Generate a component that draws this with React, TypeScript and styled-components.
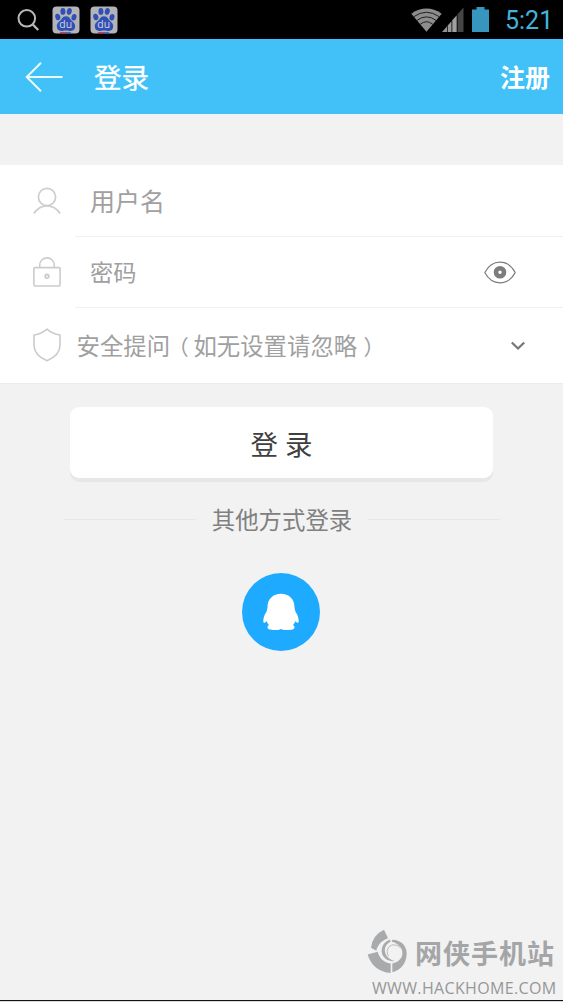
import React from 'react';
import styled, { createGlobalStyle } from 'styled-components';

const GlobalStyle = createGlobalStyle`
  * { box-sizing: border-box; }
  html, body { margin: 0; padding: 0; background: #f2f2f2; }
  body { font-family: Roboto, 'Noto Sans CJK SC', sans-serif; overflow: hidden; }
  svg { display: block; flex: none; }
`;

const Screen = styled.main`
  display: flex;
  flex-direction: column;
  width: 563px;
  height: 1002px;
  background: #f2f2f2;
  overflow: hidden;
`;

const StatusBar = styled.div`
  display: flex;
  justify-content: space-between;
  flex: none;
  height: 39px;
  padding: 0 11px 0 16px;
  background: #000;
`;

const StatusGroup = styled.div<{ $gap?: number; $left?: number }>`
  display: flex;
  align-items: center;
  gap: ${(p) => p.$gap ?? 0}px;
  margin-left: ${(p) => p.$left ?? 0}px;
`;

const Clock = styled.span`
  width: 47px;
  margin-left: 16px;
  padding-top: 2px;
  color: #43b3de;
  font: 400 25px/30px Roboto, sans-serif;
  white-space: nowrap;
`;

const Header = styled.header`
  display: flex;
  align-items: center;
  flex: none;
  height: 75px;
  padding: 0 13px 0 25px;
  background: #41c1f7;
  color: #fff;
`;

const Title = styled.h1`
  flex: 1;
  margin: -2px 0 0 31px;
  font: 400 27.5px/40px 'Noto Sans CJK SC', sans-serif;
  -webkit-text-stroke: 0.3px #fff;
`;

const Register = styled.a`
  margin-top: -2px;
  font: 700 25px/40px 'Noto Sans CJK SC', sans-serif;
`;

const Form = styled.form`
  flex: none;
  height: 219px;
  margin-top: 51px;
  background: #fff;
  border-bottom: 1px solid #ececec;
`;

const Field = styled.div<{ $height: number }>`
  display: flex;
  height: ${(p) => p.$height}px;
  padding-left: 33px;
`;

const IconSlot = styled.div`
  display: flex;
  align-items: center;
  width: 42px;
  padding-bottom: 1px;
`;

const FieldBody = styled.div<{ $indent: number; $right: number; $last?: boolean }>`
  display: flex;
  flex: 1;
  align-items: center;
  justify-content: space-between;
  padding: 0 ${(p) => p.$right}px 0 ${(p) => p.$indent}px;
  border-bottom: ${(p) => (p.$last ? 'none' : '1px solid #f0f0f0')};
`;

const Placeholder = styled.span<{ $size: number }>`
  margin-top: -2px;
  color: #a0a0a0;
  font: 400 ${(p) => p.$size}px/34px 'Noto Sans CJK SC', sans-serif;
  white-space: nowrap;
`;

const Paren = styled.span<{ $shift: number }>`
  display: inline-block;
  width: 23.4px;
  margin: 0 ${(p) => -p.$shift}px 0 ${(p) => p.$shift}px;
  text-align: center;
  font-size: 21px;
  line-height: 24px;
`;

const LoginButton = styled.button`
  flex: none;
  width: 423px;
  height: 71px;
  margin: 23px 0 0 70px;
  padding: 0;
  border: 0;
  border-radius: 9px;
  background: #fff;
  box-shadow: 0 4px 0 #e7e7e7;
  color: #404040;
  font: 400 27.5px/40px 'Noto Sans CJK SC', sans-serif;
  word-spacing: 1px;
`;

const Divider = styled.div`
  display: flex;
  align-items: center;
  justify-content: space-between;
  flex: none;
  height: 36px;
  margin: 23px 63px 0 64px;
`;

const Rule = styled.span`
  width: 132px;
  height: 1px;
  background: #e7e7e7;
`;

const DividerText = styled.span`
  color: #808080;
  font: 400 23.4px/36px 'Noto Sans CJK SC', sans-serif;
`;

const QQButton = styled.div`
  display: flex;
  align-items: center;
  justify-content: center;
  flex: none;
  width: 78px;
  height: 78px;
  margin: 36px 0 0 242.4px;
  border-radius: 50%;
  background: #1eaaff;
`;

const Watermark = styled.footer`
  display: flex;
  flex-direction: column;
  align-self: flex-end;
  width: 196px;
  height: 73px;
  margin-top: auto;
  color: #a4a5a6;
`;

const Brand = styled.div`
  display: flex;
  align-items: center;
  height: 48px;
`;

const BrandName = styled.span`
  margin: 4px 0 0 7px;
  font: 700 27px/40px 'Noto Sans CJK SC', sans-serif;
  letter-spacing: 1px;
  white-space: nowrap;
`;

const Site = styled.span`
  margin: 2px 0 0 5px;
  color: #969798;
  font: 400 16px/22px 'Open Sans', sans-serif;
  letter-spacing: 0.35px;
  white-space: nowrap;
`;

const BottomEdge = styled.div`
  flex: none;
  height: 2px;
  background: #d8dcdf;
  border-top: 1px solid #101214;
`;

const BaiduIcon = () => (
  <svg width="28" height="28" viewBox="0 0 28 28">
    <rect x=".5" y=".5" width="27" height="27" rx="4" fill="#b4b4b8" />
    <g fill="#3150b5">
      <ellipse cx="5.8" cy="11" rx="2.5" ry="3.3" transform="rotate(-15 5.8 11)" />
      <ellipse cx="10.9" cy="5.4" rx="2.5" ry="3.4" />
      <ellipse cx="17.3" cy="5.4" rx="2.5" ry="3.4" transform="rotate(10 17.3 5.4)" />
      <ellipse cx="22" cy="11.2" rx="2.5" ry="3.3" transform="rotate(12 22 11.2)" />
      <path d="M14 10.3c2.3 0 3.4 1.3 4.5 3 1.5 2.2 4.7 3.6 4.7 7 0 3-1.8 4.6-4.4 4.6-1.8 0-3-.5-4.8-.5s-3 .5-4.8.5c-2.6 0-4.4-1.6-4.4-4.6 0-3.4 3.2-4.8 4.7-7 1.1-1.7 2.2-3 4.5-3z" />
    </g>
    <path d="M8 27h6" stroke="#a52b45" strokeWidth="1.5" />
    <path d="M14 27h5" stroke="#3150b5" strokeWidth="1.5" />
    <text x="13.7" y="22.3" textAnchor="middle" fill="#d4d5df" fontFamily="Open Sans, sans-serif" fontSize="10.500" fontWeight="400">du</text>
  </svg>
);

const SearchIcon = () => (
  <svg width="24" height="24" viewBox="0 0 24 24" fill="none" stroke="#b8b8b8" strokeWidth="2">
    <circle cx="10.8" cy="10.3" r="8.3" />
    <path d="M16.8 16.5l5.4 5.5" strokeWidth="2.4" />
  </svg>
);

const WifiIcon = () => (
  <svg width="31" height="24" viewBox="0 0 32 24">
    <path d="M.3 5.500Q16-5 31.700 5.500L16 24z" fill="#8d8d8d" />
    <g fill="none" stroke="#1c1c1c" strokeWidth="1">
      <path d="M3 8.500Q16-.5 29 8.500" />
      <path d="M6 12.500Q16 5 26 12.500" />
      <path d="M9.500 16.500Q16 11 22.500 16.500" />
    </g>
  </svg>
);

const SignalIcon = () => (
  <svg width="22" height="25" viewBox="0 0 22 25">
    <path d="M0 25L5 19.300V25z" fill="#929292" />
    <path d="M5.700 18.500L9.500 14.200V25H5.700z" fill="#989898" />
    <path d="M10.300 13.300L14.700 8.300V25h-4.400z" fill="#a0a0a0" />
    <path d="M15.600 7.300L21.500.6V25h-5.900z" fill="#454545" />
  </svg>
);

const BatteryIcon = () => (
  <svg width="17" height="25" viewBox="0 0 17 25">
    <path d="M4.500 0h8v2.500H17V25H0V2.500h4.500z" fill="#3796bd" />
  </svg>
);

const BackIcon = () => (
  <svg width="38" height="30" viewBox="0 0 38 30" fill="none" stroke="#eafaff" strokeWidth="2">
    <path d="M37.500 15H1.700M16 .8L1.700 15 16 29.200" />
  </svg>
);

const UserIcon = () => (
  <svg width="28" height="28" viewBox="0 0 28 28" fill="none" stroke="#cecece" strokeWidth="1.7">
    <circle cx="14" cy="10" r="8.600" />
    <path d="M.9 26.500Q6 18.800 14 18.800t13.100 7.700" />
  </svg>
);

const LockIcon = () => (
  <svg width="28" height="30" viewBox="0 0 28 30" fill="none" stroke="#cccccc" strokeWidth="1.600">
    <rect x=".9" y="10.600" width="26.200" height="18.400" rx="1" />
    <path d="M6.700 10.600V8.200a7.300 7.300 0 0 1 14.600 0v2.400" />
    <circle cx="14" cy="19.300" r="1.800" strokeWidth="1.800" />
  </svg>
);

const ShieldIcon = () => (
  <svg width="28" height="34" viewBox="0 0 28 34" fill="none" stroke="#cbcbcb" strokeWidth="1.600" strokeLinejoin="round">
    <path d="M14 1.200Q19.500 6 27 7v10.500Q27 27 14 32.800 1 27 1 17.500V7Q8.500 6 14 1.200z" />
  </svg>
);

const EyeIcon = () => (
  <svg width="32" height="23" viewBox="0 0 32 23" fill="none" stroke="#7c7c7c">
    <path d="M.8 11.500C4.500 4.500 9.800 1.200 16 1.200s11.500 3.300 15.200 10.300C27.500 18.500 22.200 21.800 16 21.800S4.500 18.500.8 11.500z" strokeWidth="1.200" />
    <circle cx="16" cy="11.300" r="4" strokeWidth="4.600" />
  </svg>
);

const ChevronIcon = () => (
  <svg width="14" height="10" viewBox="0 0 14 10" fill="none" stroke="#777" strokeWidth="2.300">
    <path d="M.8 1.500L7 7.500l6.200-6" />
  </svg>
);

const PenguinIcon = () => (
  <svg width="36" height="38" viewBox="0 0 36 38" fill="#fff">
    <path d="M18 .8C10.200.8 4.500 6.200 4.500 14c0 2-.6 3.200-1.100 5C1.500 21.500.3 25 .3 28c0 1.600.8 2.200 1.700 1.400l1.800-1.200c.4 1.600 1.200 2.800 2.200 3.800-1 .6-1.500 1.500-1.500 2.500 0 1.800 3 2.500 6.500 2.500 3.200 0 5.600-.1 7-1.100 1.400 1 3.800 1.100 7 1.100 3.500 0 6.500-.7 6.500-2.500 0-1-.5-1.900-1.500-2.500 1-1 1.800-2.200 2.200-3.800l1.800 1.200c.9.8 1.700.2 1.700-1.400 0-3-1.200-6.500-3.100-9-.5-1.800-1.100-3-1.100-5C31.500 6.200 25.800.8 18 .8z" />
  </svg>
);

const BrandLogo = () => (
  <svg width="41" height="44" viewBox="18 8 123 138" preserveAspectRatio="none" fill="#a9aaab">
    <path d="M69 10L81 37C61 45 50 58 46 76L30 67Q34 27 69 10z" />
    <path d="M20 88L50 79C56 101 68 112 89 116V146C54 143 31 125 20 88z" />
    <path d="M94 116C108 113 116 107 122 96C127 82 124 69 112 58C105 52 99 49 92 48L94 42C121 43 137 60 137 86C136 117 120 137 94 144z" />
    <path d="M88 41V48C73 57 69 70 73 84C77 96 86 104 101 109C81 110 68 101 63 86C59 65 68 48 88 41z" />
    <path d="M118 66C106 56 93 55 84 64C77 73 77 84 83 94" fill="none" stroke="#b4b5b6" strokeWidth="3" />
  </svg>
);

export default function App() {
  return (
    <>
      <GlobalStyle />
      <Screen>
        <StatusBar>
          <StatusGroup>
            <SearchIcon />
            <StatusGroup $gap={10} $left={12}>
              <BaiduIcon />
              <BaiduIcon />
            </StatusGroup>
          </StatusGroup>
          <StatusGroup>
            <WifiIcon />
            <SignalIcon />
            <StatusGroup $left={8}>
              <BatteryIcon />
            </StatusGroup>
            <Clock>5:21</Clock>
          </StatusGroup>
        </StatusBar>
        <Header>
          <BackIcon />
          <Title>登录</Title>
          <Register>注册</Register>
        </Header>
        <Form>
          <Field $height={72}>
            <IconSlot><UserIcon /></IconSlot>
            <FieldBody $indent={15} $right={0}>
              <Placeholder $size={25}>用户名</Placeholder>
            </FieldBody>
          </Field>
          <Field $height={71}>
            <IconSlot><LockIcon /></IconSlot>
            <FieldBody $indent={15} $right={47}>
              <Placeholder $size={23.2}>密码</Placeholder>
              <EyeIcon />
            </FieldBody>
          </Field>
          <Field $height={75}>
            <IconSlot><ShieldIcon /></IconSlot>
            <FieldBody $indent={1.5} $right={38} $last>
              <Placeholder $size={23.4}>
                安全提问<Paren $shift={-3.5}>（</Paren>如无设置请忽略<Paren $shift={5}>）</Paren>
              </Placeholder>
              <ChevronIcon />
            </FieldBody>
          </Field>
        </Form>
        <LoginButton type="button">登 录</LoginButton>
        <Divider>
          <Rule />
          <DividerText>其他方式登录</DividerText>
          <Rule />
        </Divider>
        <QQButton><PenguinIcon /></QQButton>
        <Watermark>
          <Brand>
            <BrandLogo />
            <BrandName>网侠手机站</BrandName>
          </Brand>
          <Site>WWW.HACKHOME.COM</Site>
        </Watermark>
        <BottomEdge />
      </Screen>
    </>
  );
}
